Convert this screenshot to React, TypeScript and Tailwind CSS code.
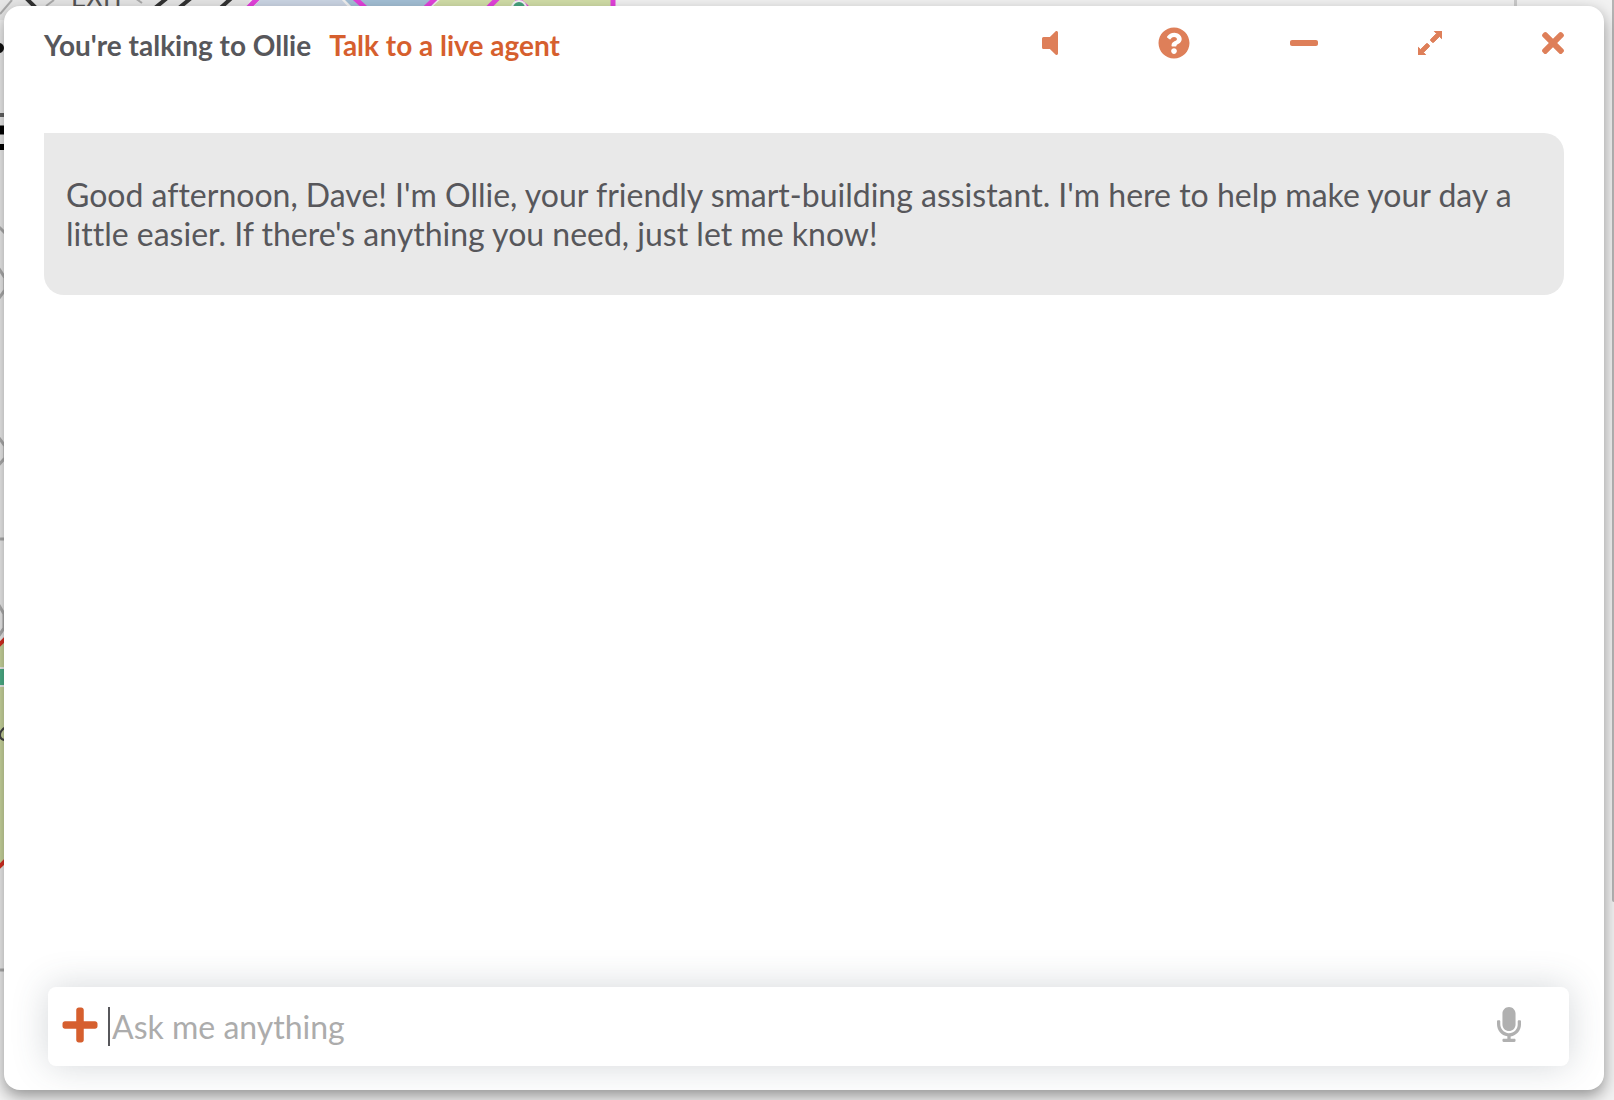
import React from "react";
import { FaMicrophone, FaMinus, FaPlus, FaQuestionCircle, FaTimes, FaVolumeOff } from "react-icons/fa";

function MapBackdrop() {
  return (
    <svg aria-hidden="true" className="absolute inset-0 h-full w-full" fill="none">
      <path d="M0 0H250L240 20H0Z" fill="#e6e6e6" />
      <path d="M240 20 262 -2H340L360 20Z" fill="#ccd6e5" />
      <path d="M365 20 340 -5H440L420 20Z" fill="#a4c0d6" />
      <path d="M418 20 445 -5H615V20Z" fill="#d2dea8" />
      <g stroke="#e342dc" strokeWidth="5">
        <path d="M244 12 262 -6M350 -6 370 12M421 12 440 -6M484 12 502 -6M514 -4 532 12M613 0V12" />
      </g>
      <circle cx="519" cy="8" r="7" fill="#46a47e" stroke="#f4f4f4" strokeWidth="2" />
      <path d="M22 -6 40 12M150 12 172 -6M174 12 196 -6M216 12 236 -6" stroke="#333" strokeWidth="4" />
      <path d="M135 -2 142 3M0 14 12 0M46 6 54 0" stroke="#aaa" strokeWidth="2" />
      <text x="71" y="7" fontSize="26" fill="#555" fontFamily="Lato, sans-serif">EXIT</text>
      <path d="M0 115H8" stroke="#666" strokeWidth="4" />
      <path d="M0 130H8" stroke="#000" strokeWidth="9" />
      <path d="M0 147H8" stroke="#000" strokeWidth="6" />
      <circle cx="-1" cy="48" r="5" fill="#111" />
      <g stroke="#b0b0b0" strokeWidth="3">
        <path d="M-4 224 8 236M-4 264 5 278V290L-4 302M-4 434 5 446V458L-4 468M-4 600 4 614V628L-4 640M0 539H8M0 970H8" />
      </g>
      <path d="M-2 646 8 636V862L-2 870Z" fill="#cfdca2" />
      <path d="M-4 648 8 636M-4 870 8 858" stroke="#dc2f22" strokeWidth="4" />
      <rect x="-4" y="668" width="10" height="18" fill="#4fb58c" stroke="#f4f4f4" strokeWidth="2" />
      <path d="M6 727C-2 731-2 740 6 740" stroke="#444" strokeWidth="2" />
    </svg>
  );
}

function ExpandIcon() {
  return (
    <svg viewBox="32 64 384 384" fill="currentColor" stroke="currentColor" strokeWidth="14" className="size-6">
      <path d="M212.686 315.314L120 408l32.922 31.029c15.12 15.12 4.412 40.971-16.97 40.971h-112C10.697 480 0 469.255 0 456V344c0-21.382 25.803-32.09 40.922-16.971L72 360l92.686-92.686c6.248-6.248 16.379-6.248 22.627 0l25.373 25.373c6.249 6.248 6.249 16.378 0 22.627z" />
      <path d="M235.314 196.686L328 104l-32.922-31.029C279.958 57.851 290.666 32 312.048 32h112C437.303 32 448 42.745 448 56v112c0 21.382-25.803 32.09-40.922 16.971L376 152l-92.686 92.686c-6.248 6.248-16.379 6.248-22.627 0l-25.373-25.373c-6.249-6.248-6.249-16.378 0-22.627z" />
    </svg>
  );
}

const actions = [
  { label: "Mute", icon: <FaVolumeOff className="h-8 w-4" /> },
  { label: "Help", icon: <FaQuestionCircle className="size-8" /> },
  { label: "Minimize", icon: <FaMinus className="h-8 w-7" /> },
  { label: "Expand", icon: <ExpandIcon /> },
  { label: "Close", icon: <FaTimes className="h-8 w-[22px]" /> },
];

export default function App() {
  return (
    <div className="relative flex h-screen overflow-hidden bg-[#f2f2f2] pt-[6px] pr-[10px] pb-[10px] pl-1 font-['Lato',sans-serif] text-[#57575b] [font-variant-ligatures:none]">
      <MapBackdrop />
      <div aria-hidden="true" className="absolute top-0 right-[97px] h-4 w-[3px] bg-[#cccccc]" />
      <div aria-hidden="true" className="absolute top-0 right-0 h-[902px] w-[2px] rounded-bl-sm bg-[#b4b4b4]" />
      <main className="relative flex flex-1 flex-col overflow-hidden rounded-2xl bg-white shadow-[0_6px_16px_rgba(0,0,0,0.4)]">
        <header className="flex items-start justify-between pt-[21px] pr-10 pl-10">
          <div className="flex gap-[18px] text-[28px] leading-9 font-bold">
            <h1>You're talking to Ollie</h1>
            <a href="#agent" className="text-[#d65f2e]">Talk to a live agent</a>
          </div>
          <div className="flex items-center gap-[100px] text-[#de7f59]">
            {actions.map((a) => (
              <button key={a.label} type="button" aria-label={a.label}>
                {a.icon}
              </button>
            ))}
          </div>
        </header>

        <section className="mx-10 mt-[70px] flex-1">
          <p className="rounded-[20px] rounded-tl-none bg-[#e9e9e9] px-[22px] py-[42px] text-[32px] leading-[39px]">
            Good afternoon, Dave! I'm Ollie, your friendly smart-building assistant. I'm here to help make your day a
            little easier. If there's anything you need, just let me know!
          </p>
        </section>

        <form
          className="mr-[35px] mb-6 ml-11 flex h-[79px] items-center rounded-lg bg-white pr-12 pl-[14px] shadow-[0_0_36px_rgba(60,75,85,0.22)]"
          onSubmit={(e) => e.preventDefault()}
        >
          <button type="button" aria-label="Add attachment" className="mb-1 text-[#d65f2e]">
            <FaPlus className="h-10 w-9" />
          </button>
          <div aria-hidden="true" className="ml-[10px] h-[39px] w-[2px] bg-[#57575b]" />
          <input
            type="text"
            aria-label="Message"
            placeholder="Ask me anything"
            className="h-12 min-w-0 flex-1 bg-transparent pl-[2px] text-[32px] outline-none placeholder:text-[#acacac]"
          />
          <button type="button" aria-label="Voice input" className="mb-1 text-[#b0b0b0]">
            <FaMicrophone className="h-[35px] w-6" />
          </button>
        </form>
      </main>
    </div>
  );
}
